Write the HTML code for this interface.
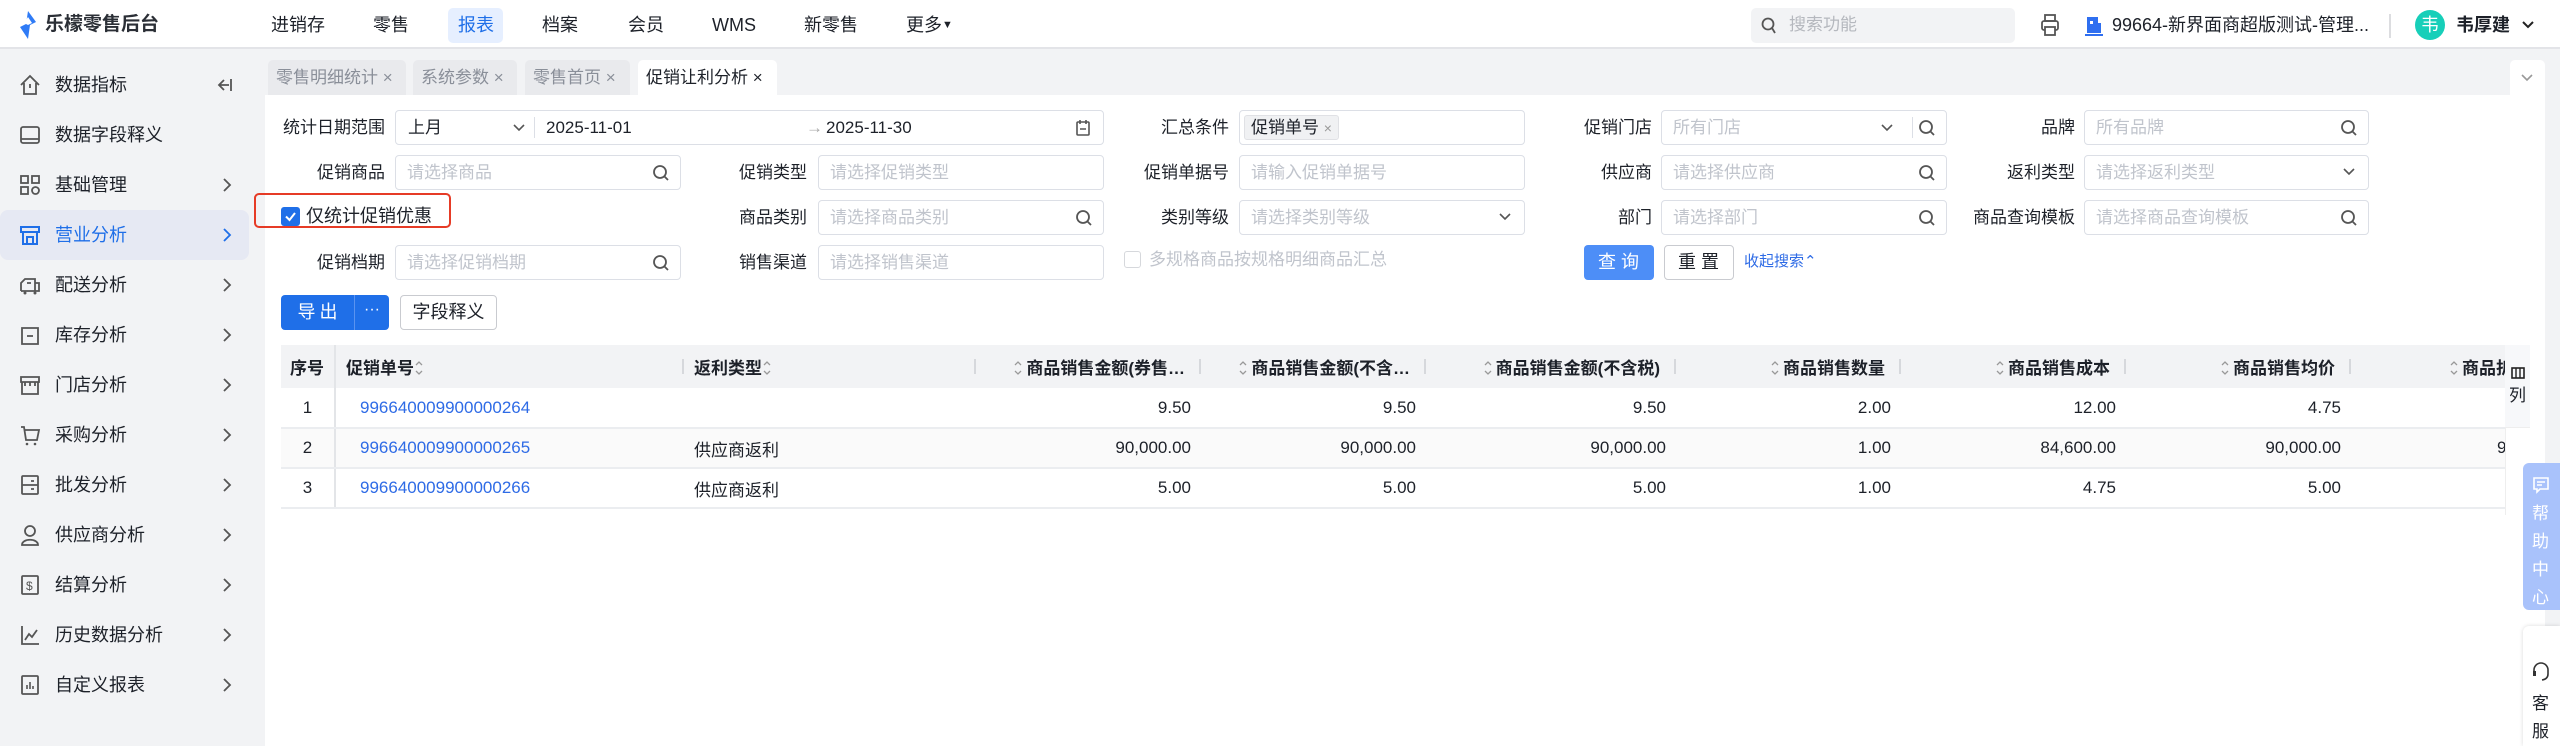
<!DOCTYPE html>
<html><head><meta charset="utf-8">
<style>
*{box-sizing:border-box;margin:0;padding:0}
body{width:2560px;height:746px;overflow:hidden;background:#f2f3f5;font-family:"Liberation Sans","Noto Sans CJK SC",sans-serif;font-size:17px;color:#1d2129;position:relative}
.a{position:absolute;white-space:nowrap}
.top{left:0;top:0;width:2560px;height:49px;background:#fff;border-bottom:2px solid #e3e4e8}
.nav{top:13px;font-size:18px;line-height:24px}
.side{left:0;top:49px;width:265px;height:697px;background:#f2f3f5}
.si{left:55px;font-size:18px;line-height:24px}
.ic{left:19px;width:22px;height:22px}
.chev{left:222px;width:10px;height:14px}
.tab{top:60px;height:35px;background:#e9eaed;border-radius:5px 5px 0 0;color:#8a8f99;font-size:17px;line-height:35px;padding-left:8px}
.panel{left:265px;top:95px;width:2280px;height:651px;background:#fff}
.lb{width:160px;text-align:right;font-size:17px;line-height:35px;height:35px}
.in{height:35px;border:1px solid #dcdfe6;border-radius:4px;background:#fff;color:#c0c4cc;font-size:17px;line-height:33px;padding-left:11px}
.sr{position:absolute;right:10px;top:8px;width:18px;height:18px}
.dd{position:absolute;right:12px;top:10px;width:14px;height:12px}
th,td{white-space:nowrap;overflow:hidden}
table{border-collapse:collapse;table-layout:fixed;font-size:17px}
th{background:#f2f3f5;height:43px;font-weight:600;text-align:right;padding-right:16px;position:relative;color:#1d2129}
th .dv{position:absolute;right:0;top:14px;width:2px;height:15px;background:#d6d8dc}
td{height:40px;text-align:right;padding-right:10px;border-bottom:2px solid #ebedf0}
tr.g td{background:#fafafa}
.lk{color:#2e6be6}
.so{display:inline-block;width:10px;height:18px;vertical-align:-3px;margin-right:3px}
</style></head><body>
<div class="a top"></div>
<svg class="a" style="left:19px;top:11px" width="18" height="28" viewBox="0 0 18 28"><path d="M9 0 L17 11 L11 14 L9 28 L1 16 L7 13 Z" fill="#2f7bf6"/><path d="M9 6 L13 12 L9 14 L5 12 Z" fill="#fff"/></svg>
<div class="a" style="left:45px;top:13px;font-size:19px;font-weight:700;color:#2b2f36;line-height:24px">乐檬零售后台</div>
<div class="a nav" style="left:271px">进销存</div>
<div class="a nav" style="left:373px">零售</div>
<div class="a" style="left:448px;top:8px;width:55px;height:35px;background:#e6efff;border-radius:5px"></div>
<div class="a nav" style="left:458px;color:#1f6fe8">报表</div>
<div class="a nav" style="left:542px">档案</div>
<div class="a nav" style="left:628px">会员</div>
<div class="a nav" style="left:712px">WMS</div>
<div class="a nav" style="left:804px">新零售</div>
<div class="a nav" style="left:906px">更多<span style="font-size:11px;vertical-align:3px">▼</span></div>
<div class="a" style="left:1751px;top:8px;width:264px;height:35px;background:#f2f3f5;border-radius:5px"></div>
<svg class="a" style="left:1761px;top:17px" width="16" height="18" viewBox="0 0 16 18"><circle cx="7" cy="7" r="5.5" fill="none" stroke="#555" stroke-width="1.8"/><path d="M11 11 L14 16" stroke="#555" stroke-width="1.8"/></svg>
<div class="a" style="left:1789px;top:13px;color:#b5b8be;line-height:24px">搜索功能</div>
<svg class="a" style="left:2040px;top:13px" width="20" height="24" viewBox="0 0 20 24"><rect x="5" y="2" width="10" height="6" fill="none" stroke="#555" stroke-width="1.8"/><rect x="2" y="8" width="16" height="9" rx="2" fill="none" stroke="#555" stroke-width="1.8"/><rect x="5" y="14" width="10" height="8" fill="#fff" stroke="#555" stroke-width="1.8"/></svg>
<svg class="a" style="left:2085px;top:15px" width="18" height="22" viewBox="0 0 18 22"><rect x="2" y="2" width="11" height="16" fill="#2f6ff0"/><rect x="10" y="8" width="6" height="10" fill="#2f6ff0"/><rect x="5" y="6" width="3" height="3" fill="#fff"/><rect x="0" y="19" width="18" height="2" fill="#2f6ff0"/></svg>
<div class="a" style="left:2112px;top:13px;font-size:18px;line-height:24px">99664-新界面商超版测试-管理...</div>
<div class="a" style="left:2389px;top:14px;width:2px;height:24px;background:#dcdde0"></div>
<div class="a" style="left:2415px;top:10px;width:30px;height:30px;border-radius:50%;background:#17cfb9;color:#fff;text-align:center;line-height:30px;font-size:18px">韦</div>
<div class="a" style="left:2456px;top:13px;font-size:18px;font-weight:600;line-height:24px">韦厚建</div>
<svg class="a" style="left:2521px;top:20px" width="14" height="10" viewBox="0 0 14 10"><path d="M2 2 L7 7 L12 2" fill="none" stroke="#222" stroke-width="2"/></svg>

<div class="a side"></div>
<div class="a" style="left:0;top:210px;width:249px;height:50px;background:#e6e9f3;border-radius:8px"></div>
<svg class="a ic" style="top:74px" viewBox="0 0 22 22"><path d="M2 11 L11 2 L20 11 M5 9 V20 H17 V9" fill="none" stroke="#555" stroke-width="1.8"/><path d="M11 10 V14" stroke="#555" stroke-width="1.8"/></svg>
<div class="a si" style="top:73px">数据指标</div>
<svg class="a" style="left:215px;top:77px" width="18" height="16" viewBox="0 0 18 16"><path d="M9 3 L4 8 L9 13 M4 8 H14 M16 2 V14" fill="none" stroke="#555" stroke-width="1.8"/></svg>
<svg class="a ic" style="top:124px" viewBox="0 0 22 22"><rect x="2" y="3" width="18" height="16" rx="2" fill="none" stroke="#555" stroke-width="1.8"/><path d="M2 15 H20" stroke="#555" stroke-width="1.8"/></svg>
<div class="a si" style="top:123px">数据字段释义</div>
<svg class="a ic" style="top:174px" viewBox="0 0 22 22"><rect x="2" y="2" width="7" height="7" fill="none" stroke="#555" stroke-width="1.8"/><rect x="13" y="2" width="7" height="7" fill="none" stroke="#555" stroke-width="1.8"/><rect x="2" y="13" width="7" height="7" fill="none" stroke="#555" stroke-width="1.8"/><circle cx="16.5" cy="16.5" r="3.5" fill="none" stroke="#555" stroke-width="1.8"/></svg>
<div class="a si" style="top:173px">基础管理</div>
<svg class="a ic" style="top:224px" viewBox="0 0 22 22"><path d="M2 3 H20 V8 H2 Z M4 8 V20 H18 V8 M8 20 V13 H14 V20" fill="none" stroke="#1f6fe8" stroke-width="2"/></svg>
<div class="a si" style="top:223px;color:#1f6fe8">营业分析</div>
<svg class="a ic" style="top:274px" viewBox="0 0 22 22"><path d="M2 17 V9 L6 5 H16 V17 M16 9 H20 V17 H2 M8 9 H12" fill="none" stroke="#555" stroke-width="1.8"/><circle cx="6" cy="19" r="1.5" fill="#555"/><circle cx="16" cy="19" r="1.5" fill="#555"/></svg>
<div class="a si" style="top:273px">配送分析</div>
<svg class="a ic" style="top:324px" viewBox="0 0 22 22"><path d="M3 4 H19 V20 H3 Z M8 12 H14" fill="none" stroke="#555" stroke-width="1.8"/></svg>
<div class="a si" style="top:323px">库存分析</div>
<svg class="a ic" style="top:374px" viewBox="0 0 22 22"><path d="M2 3 H20 V8 H2 Z M3 8 V20 H19 V8 M6 8 V12 M11 8 V12 M16 8 V12" fill="none" stroke="#555" stroke-width="1.8"/></svg>
<div class="a si" style="top:373px">门店分析</div>
<svg class="a ic" style="top:424px" viewBox="0 0 22 22"><path d="M2 3 H5 L7 16 H18 L20 6 H6" fill="none" stroke="#555" stroke-width="1.8"/><circle cx="8" cy="20" r="1.3" fill="#555"/><circle cx="16" cy="20" r="1.3" fill="#555"/></svg>
<div class="a si" style="top:423px">采购分析</div>
<svg class="a ic" style="top:474px" viewBox="0 0 22 22"><rect x="3" y="2" width="16" height="18" rx="1" fill="none" stroke="#555" stroke-width="1.8"/><path d="M3 11 H19 M12 7 H15 M12 15 H15" stroke="#555" stroke-width="1.8"/></svg>
<div class="a si" style="top:473px">批发分析</div>
<svg class="a ic" style="top:524px" viewBox="0 0 22 22"><circle cx="11" cy="7" r="5" fill="none" stroke="#555" stroke-width="1.8"/><path d="M3 21 C3 14 19 14 19 21 Z" fill="none" stroke="#555" stroke-width="1.8"/></svg>
<div class="a si" style="top:523px">供应商分析</div>
<svg class="a ic" style="top:574px" viewBox="0 0 22 22"><rect x="3" y="2" width="16" height="18" rx="1" fill="none" stroke="#555" stroke-width="1.8"/><text x="7" y="16" font-size="12" fill="#555" font-family="Liberation Sans">$</text></svg>
<div class="a si" style="top:573px">结算分析</div>
<svg class="a ic" style="top:624px" viewBox="0 0 22 22"><path d="M3 2 V20 H20 M6 16 L10 10 L13 13 L18 6" fill="none" stroke="#555" stroke-width="1.8"/></svg>
<div class="a si" style="top:623px">历史数据分析</div>
<svg class="a ic" style="top:674px" viewBox="0 0 22 22"><rect x="3" y="2" width="16" height="18" rx="1" fill="none" stroke="#555" stroke-width="1.8"/><path d="M8 15 V11 M11 15 V8 M14 15 V12" stroke="#555" stroke-width="1.6"/></svg>
<div class="a si" style="top:673px">自定义报表</div>
<svg class="a chev" style="top:178px" viewBox="0 0 10 14"><path d="M2 1 L8 7 L2 13" fill="none" stroke="#555" stroke-width="1.8"/></svg>
<svg class="a chev" style="top:228px" viewBox="0 0 10 14"><path d="M2 1 L8 7 L2 13" fill="none" stroke="#1f6fe8" stroke-width="1.8"/></svg>
<svg class="a chev" style="top:278px" viewBox="0 0 10 14"><path d="M2 1 L8 7 L2 13" fill="none" stroke="#555" stroke-width="1.8"/></svg>
<svg class="a chev" style="top:328px" viewBox="0 0 10 14"><path d="M2 1 L8 7 L2 13" fill="none" stroke="#555" stroke-width="1.8"/></svg>
<svg class="a chev" style="top:378px" viewBox="0 0 10 14"><path d="M2 1 L8 7 L2 13" fill="none" stroke="#555" stroke-width="1.8"/></svg>
<svg class="a chev" style="top:428px" viewBox="0 0 10 14"><path d="M2 1 L8 7 L2 13" fill="none" stroke="#555" stroke-width="1.8"/></svg>
<svg class="a chev" style="top:478px" viewBox="0 0 10 14"><path d="M2 1 L8 7 L2 13" fill="none" stroke="#555" stroke-width="1.8"/></svg>
<svg class="a chev" style="top:528px" viewBox="0 0 10 14"><path d="M2 1 L8 7 L2 13" fill="none" stroke="#555" stroke-width="1.8"/></svg>
<svg class="a chev" style="top:578px" viewBox="0 0 10 14"><path d="M2 1 L8 7 L2 13" fill="none" stroke="#555" stroke-width="1.8"/></svg>
<svg class="a chev" style="top:628px" viewBox="0 0 10 14"><path d="M2 1 L8 7 L2 13" fill="none" stroke="#555" stroke-width="1.8"/></svg>
<svg class="a chev" style="top:678px" viewBox="0 0 10 14"><path d="M2 1 L8 7 L2 13" fill="none" stroke="#555" stroke-width="1.8"/></svg>

<div class="a tab" style="left:268px;width:138px">零售明细统计 ×</div>
<div class="a tab" style="left:413px;width:104px">系统参数 ×</div>
<div class="a tab" style="left:525px;width:105px">零售首页 ×</div>
<div class="a tab" style="left:638px;width:139px;background:#fff;color:#1d2129">促销让利分析 ×</div>
<div class="a" style="left:2510px;top:60px;width:35px;height:35px;background:#fff;border-radius:5px 5px 0 0"></div>
<svg class="a" style="left:2520px;top:73px" width="14" height="10" viewBox="0 0 14 10"><path d="M2 2 L7 7 L12 2" fill="none" stroke="#999" stroke-width="1.6"/></svg>

<div class="a panel"></div>

<div class="a lb" style="left:225px;top:110px">统计日期范围</div>
<div class="a in" style="left:395px;top:110px;width:709px;color:#1d2129">
 <span style="position:absolute;left:12px">上月</span>
 <svg style="position:absolute;left:116px;top:12px" width="14" height="10" viewBox="0 0 14 10"><path d="M2 2 L7 7 L12 2" fill="none" stroke="#555" stroke-width="1.6"/></svg>
 <span style="position:absolute;left:138px;top:6px;width:1px;height:21px;background:#dcdfe6"></span>
 <span style="position:absolute;left:150px">2025-11-01</span>
 <span style="position:absolute;left:410px;color:#aaa">→</span>
 <span style="position:absolute;left:430px">2025-11-30</span>
 <svg style="position:absolute;right:12px;top:8px" width="16" height="18" viewBox="0 0 16 18"><rect x="2" y="3" width="12" height="13" rx="1" fill="none" stroke="#555" stroke-width="1.6"/><path d="M5 1 V5 M11 1 V5 M5 10 H11" stroke="#555" stroke-width="1.6"/></svg>
</div>
<div class="a lb" style="left:1069px;top:110px">汇总条件</div>
<div class="a in" style="left:1239px;top:110px;width:286px">
 <span style="position:absolute;left:4px;top:4px;height:25px;padding:0 6px;background:#f0f1f3;border:1px solid #e0e1e5;border-radius:3px;color:#1d2129;line-height:23px">促销单号 <span style="color:#999;font-size:14px">×</span></span>
</div>
<div class="a lb" style="left:1492px;top:110px">促销门店</div>
<div class="a in" style="left:1661px;top:110px;width:286px">所有门店
 <svg style="position:absolute;right:52px;top:12px" width="14" height="10" viewBox="0 0 14 10"><path d="M2 2 L7 7 L12 2" fill="none" stroke="#555" stroke-width="1.6"/></svg>
 <span style="position:absolute;right:33px;top:6px;width:1px;height:21px;background:#dcdfe6"></span>
 <svg class="sr" viewBox="0 0 18 18"><circle cx="8" cy="8" r="6" fill="none" stroke="#555" stroke-width="1.8"/><path d="M12.5 12.5 L16 16" stroke="#555" stroke-width="1.8"/></svg>
</div>
<div class="a lb" style="left:1915px;top:110px">品牌</div>
<div class="a in" style="left:2084px;top:110px;width:285px">所有品牌<svg class="sr" viewBox="0 0 18 18"><circle cx="8" cy="8" r="6" fill="none" stroke="#555" stroke-width="1.8"/><path d="M12.5 12.5 L16 16" stroke="#555" stroke-width="1.8"/></svg></div>

<div class="a lb" style="left:225px;top:155px">促销商品</div>
<div class="a in" style="left:395px;top:155px;width:286px">请选择商品<svg class="sr" viewBox="0 0 18 18"><circle cx="8" cy="8" r="6" fill="none" stroke="#555" stroke-width="1.8"/><path d="M12.5 12.5 L16 16" stroke="#555" stroke-width="1.8"/></svg></div>
<div class="a lb" style="left:647px;top:155px">促销类型</div>
<div class="a in" style="left:818px;top:155px;width:286px">请选择促销类型</div>
<div class="a lb" style="left:1069px;top:155px">促销单据号</div>
<div class="a in" style="left:1239px;top:155px;width:286px">请输入促销单据号</div>
<div class="a lb" style="left:1492px;top:155px">供应商</div>
<div class="a in" style="left:1661px;top:155px;width:286px">请选择供应商<svg class="sr" viewBox="0 0 18 18"><circle cx="8" cy="8" r="6" fill="none" stroke="#555" stroke-width="1.8"/><path d="M12.5 12.5 L16 16" stroke="#555" stroke-width="1.8"/></svg></div>
<div class="a lb" style="left:1915px;top:155px">返利类型</div>
<div class="a in" style="left:2084px;top:155px;width:285px">请选择返利类型<svg class="dd" viewBox="0 0 14 12"><path d="M2 3 L7 8 L12 3" fill="none" stroke="#555" stroke-width="1.6"/></svg></div>

<div class="a" style="left:254px;top:193px;width:197px;height:35px;border:2.5px solid #e63b26;border-radius:5px"></div>
<div class="a" style="left:281px;top:207px;width:19px;height:19px;background:#1f6fe8;border-radius:3px"></div>
<svg class="a" style="left:284px;top:210px" width="13" height="13" viewBox="0 0 13 13"><path d="M2 6.5 L5.5 10 L11 3" fill="none" stroke="#fff" stroke-width="2"/></svg>
<div class="a" style="left:306px;top:204px;font-size:18px;line-height:24px">仅统计促销优惠</div>
<div class="a lb" style="left:647px;top:200px">商品类别</div>
<div class="a in" style="left:818px;top:200px;width:286px">请选择商品类别<svg class="sr" viewBox="0 0 18 18"><circle cx="8" cy="8" r="6" fill="none" stroke="#555" stroke-width="1.8"/><path d="M12.5 12.5 L16 16" stroke="#555" stroke-width="1.8"/></svg></div>
<div class="a lb" style="left:1069px;top:200px">类别等级</div>
<div class="a in" style="left:1239px;top:200px;width:286px">请选择类别等级<svg class="dd" viewBox="0 0 14 12"><path d="M2 3 L7 8 L12 3" fill="none" stroke="#555" stroke-width="1.6"/></svg></div>
<div class="a lb" style="left:1492px;top:200px">部门</div>
<div class="a in" style="left:1661px;top:200px;width:286px">请选择部门<svg class="sr" viewBox="0 0 18 18"><circle cx="8" cy="8" r="6" fill="none" stroke="#555" stroke-width="1.8"/><path d="M12.5 12.5 L16 16" stroke="#555" stroke-width="1.8"/></svg></div>
<div class="a lb" style="left:1915px;top:200px">商品查询模板</div>
<div class="a in" style="left:2084px;top:200px;width:285px">请选择商品查询模板<svg class="sr" viewBox="0 0 18 18"><circle cx="8" cy="8" r="6" fill="none" stroke="#555" stroke-width="1.8"/><path d="M12.5 12.5 L16 16" stroke="#555" stroke-width="1.8"/></svg></div>

<div class="a lb" style="left:225px;top:245px">促销档期</div>
<div class="a in" style="left:395px;top:245px;width:286px">请选择促销档期<svg class="sr" viewBox="0 0 18 18"><circle cx="8" cy="8" r="6" fill="none" stroke="#555" stroke-width="1.8"/><path d="M12.5 12.5 L16 16" stroke="#555" stroke-width="1.8"/></svg></div>
<div class="a lb" style="left:647px;top:245px">销售渠道</div>
<div class="a in" style="left:818px;top:245px;width:286px">请选择销售渠道</div>
<div class="a" style="left:1124px;top:251px;width:17px;height:17px;border:1px solid #d6d8dc;border-radius:3px;background:#fff"></div>
<div class="a" style="left:1149px;top:248px;color:#c0c4cc;line-height:24px">多规格商品按规格明细商品汇总</div>
<div class="a" style="left:1584px;top:245px;width:70px;height:35px;background:#4d8ef7;border-radius:4px;color:#fff;text-align:center;line-height:35px;font-size:18px;letter-spacing:5px;padding-left:4px">查询</div>
<div class="a" style="left:1664px;top:245px;width:70px;height:35px;border:1px solid #c9cbd0;border-radius:4px;text-align:center;line-height:33px;font-size:18px;letter-spacing:5px;padding-left:4px;background:#fff">重置</div>
<div class="a" style="left:1744px;top:251px;color:#2e6be6;font-size:15px;line-height:22px">收起搜索⌃</div>

<div class="a" style="left:281px;top:295px;width:108px;height:35px;background:#1f6fe8;border-radius:4px"></div>
<div class="a" style="left:354px;top:295px;width:1px;height:35px;background:#5a93f0"></div>
<div class="a" style="left:281px;top:295px;width:73px;text-align:center;color:#fff;font-size:18px;line-height:35px;letter-spacing:4px;padding-left:4px">导出</div>
<div class="a" style="left:355px;top:295px;width:34px;text-align:center;color:#fff;line-height:30px;font-size:16px">···</div>
<div class="a" style="left:400px;top:295px;width:97px;height:35px;border:1px solid #c9cbd0;border-radius:4px;text-align:center;line-height:33px;font-size:18px;background:#fff">字段释义</div>

<div class="a" style="left:281px;top:345px;width:2224px;height:170px;overflow:hidden">
<table style="width:2295px">
<colgroup><col style="width:54px"><col style="width:349px"><col style="width:292px"><col style="width:225px"><col style="width:225px"><col style="width:250px"><col style="width:225px"><col style="width:225px"><col style="width:225px"><col style="width:225px"></colgroup>
<tr>
<th style="text-align:left;padding-left:9px;border-right:2px solid #e3e5e8">序号</th>
<th style="text-align:left;padding-left:10px">促销单号<svg class="so" viewBox="0 0 10 18"><path d="M2 6 L5 3 L8 6 M2 12 L5 15 L8 12" fill="none" stroke="#999" stroke-width="1.3"/></svg><span class="dv"></span></th>
<th style="text-align:left;padding-left:10px">返利类型<svg class="so" viewBox="0 0 10 18"><path d="M2 6 L5 3 L8 6 M2 12 L5 15 L8 12" fill="none" stroke="#999" stroke-width="1.3"/></svg><span class="dv"></span></th>
<th><svg class="so" viewBox="0 0 10 18"><path d="M2 6 L5 3 L8 6 M2 12 L5 15 L8 12" fill="none" stroke="#999" stroke-width="1.3"/></svg>商品销售金额(券售…<span class="dv"></span></th>
<th><svg class="so" viewBox="0 0 10 18"><path d="M2 6 L5 3 L8 6 M2 12 L5 15 L8 12" fill="none" stroke="#999" stroke-width="1.3"/></svg>商品销售金额(不含…<span class="dv"></span></th>
<th><svg class="so" viewBox="0 0 10 18"><path d="M2 6 L5 3 L8 6 M2 12 L5 15 L8 12" fill="none" stroke="#999" stroke-width="1.3"/></svg>商品销售金额(不含税)<span class="dv"></span></th>
<th><svg class="so" viewBox="0 0 10 18"><path d="M2 6 L5 3 L8 6 M2 12 L5 15 L8 12" fill="none" stroke="#999" stroke-width="1.3"/></svg>商品销售数量<span class="dv"></span></th>
<th><svg class="so" viewBox="0 0 10 18"><path d="M2 6 L5 3 L8 6 M2 12 L5 15 L8 12" fill="none" stroke="#999" stroke-width="1.3"/></svg>商品销售成本<span class="dv"></span></th>
<th><svg class="so" viewBox="0 0 10 18"><path d="M2 6 L5 3 L8 6 M2 12 L5 15 L8 12" fill="none" stroke="#999" stroke-width="1.3"/></svg>商品销售均价<span class="dv"></span></th>
<th style="text-align:left;padding-left:98px"><svg class="so" viewBox="0 0 10 18"><path d="M2 6 L5 3 L8 6 M2 12 L5 15 L8 12" fill="none" stroke="#999" stroke-width="1.3"/></svg>商品折扣金额</th>
</tr>
<tr><td style="text-align:center;padding:0;border-right:2px solid #e3e5e8">1</td><td style="text-align:left;padding-left:24px" class="lk">996640009900000264</td><td></td><td>9.50</td><td>9.50</td><td>9.50</td><td>2.00</td><td>12.00</td><td>4.75</td><td></td></tr>
<tr class="g"><td style="text-align:center;padding:0;border-right:2px solid #e3e5e8">2</td><td style="text-align:left;padding-left:24px" class="lk">996640009900000265</td><td style="text-align:left;padding-left:10px">供应商返利</td><td>90,000.00</td><td>90,000.00</td><td>90,000.00</td><td>1.00</td><td>84,600.00</td><td>90,000.00</td><td style="text-align:left;padding-left:146px">90,000.00</td></tr>
<tr><td style="text-align:center;padding:0;border-right:2px solid #e3e5e8">3</td><td style="text-align:left;padding-left:24px" class="lk">996640009900000266</td><td style="text-align:left;padding-left:10px">供应商返利</td><td>5.00</td><td>5.00</td><td>5.00</td><td>1.00</td><td>4.75</td><td>5.00</td><td></td></tr>
</table></div>
<div class="a" style="left:2505px;top:345px;width:25px;height:170px;background:#fff;border-left:1px solid #eee"></div>
<div class="a" style="left:2505px;top:345px;width:25px;height:83px;background:#f7f8fa;border-bottom:1px solid #eee"></div>
<svg class="a" style="left:2511px;top:367px" width="14" height="12" viewBox="0 0 14 12"><rect x="1" y="1" width="12" height="10" fill="none" stroke="#222" stroke-width="1.6"/><path d="M5 1 V11 M9 1 V11" stroke="#222" stroke-width="1.4"/></svg>
<div class="a" style="left:2509px;top:385px;font-size:17px;line-height:22px">列</div>

<div class="a" style="left:2523px;top:463px;width:37px;height:147px;background:#a9c2fb;border-radius:6px 0 0 6px"></div>
<svg class="a" style="left:2532px;top:476px" width="18" height="18" viewBox="0 0 18 18"><path d="M2 2 H16 V13 H8 L5 16 V13 H2 Z M5 6 H13 M5 9 H10" fill="none" stroke="#fff" stroke-width="1.6"/></svg>
<div class="a" style="left:2532px;top:500px;width:20px;color:#fff;font-size:17px;line-height:28px;white-space:normal">帮助中心</div>
<div class="a" style="left:2523px;top:626px;width:37px;height:120px;background:#fff;border-radius:6px 0 0 0;box-shadow:0 0 4px rgba(0,0,0,.15)"></div>
<svg class="a" style="left:2531px;top:661px" width="20" height="22" viewBox="0 0 20 22"><path d="M3 12 V9 A7 7 0 0 1 17 9 V13 M17 13 Q17 18 11 19" fill="none" stroke="#333" stroke-width="1.6"/><rect x="2" y="10" width="3" height="5" fill="#333"/></svg>
<div class="a" style="left:2532px;top:690px;width:20px;font-size:17px;line-height:28px;white-space:normal">客服</div>
</body></html>
